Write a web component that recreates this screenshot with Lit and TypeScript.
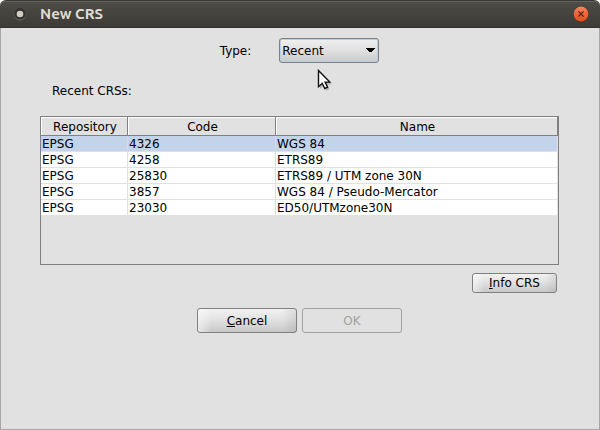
import { LitElement, html, css } from "lit";
import { customElement, state } from "lit/decorators.js";

interface Crs {
  repository: string;
  code: string;
  name: string;
}

const RECENT: Crs[] = [
  { repository: "EPSG", code: "4326", name: "WGS 84" },
  { repository: "EPSG", code: "4258", name: "ETRS89" },
  { repository: "EPSG", code: "25830", name: "ETRS89 / UTM zone 30N" },
  { repository: "EPSG", code: "3857", name: "WGS 84 / Pseudo-Mercator" },
  { repository: "EPSG", code: "23030", name: "ED50/UTMzone30N" },
];

@customElement("title-bar")
class TitleBar extends LitElement {
  static styles = css`
    :host {
      display: flex;
      align-items: center;
      box-sizing: border-box;
      height: 28px;
      padding: 0 11px 0 13px;
      background: linear-gradient(#4d4c46, #3c3b37);
      border-top: 1px solid #3a3935;
      border-bottom: 1px solid #33322e;
      box-shadow: inset 0 1px #65645d;
      border-radius: 6px 6px 0 0;
    }
    .menu,
    .close {
      display: block;
      flex: none;
    }
    h1 {
      flex: 1;
      margin: 0 0 0 13px;
      font: bold 15px/20px Ubuntu, "Noto Sans", sans-serif;
      color: #dfdbd2;
    }
    button {
      padding: 0;
      border: 0;
      background: none;
      line-height: 0;
    }
  `;

  render() {
    return html`
      <svg class="menu" width="14" height="14" viewBox="0 0 14 14" aria-hidden="true">
        <circle cx="7" cy="7.6" r="5.8" fill="#77756c" />
        <circle cx="7" cy="6.8" r="5.8" fill="#34332f" />
        <circle cx="7" cy="7" r="3.3" fill="#cfccc5" />
      </svg>
      <h1>New CRS</h1>
      <button type="button" aria-label="Close">
        <svg class="close" width="16" height="16" viewBox="0 0 16 16">
          <defs>
            <linearGradient id="g" x2="0" y2="1">
              <stop offset="0" stop-color="#f88361" />
              <stop offset=".5" stop-color="#f1633a" />
              <stop offset="1" stop-color="#e64c18" />
            </linearGradient>
          </defs>
          <circle cx="8" cy="8" r="7.8" fill="#35342f" />
          <circle cx="8" cy="8" r="7.4" fill="url(#g)" />
          <path d="M5.400 5.400l5.200 5.200M10.600 5.400l-5.200 5.200" stroke="#4a2418" stroke-width="1.300" />
        </svg>
      </button>
    `;
  }
}

@customElement("app-root")
export class AppRoot extends LitElement {
  @state() private selected = 0;

  static styles = css`
    :host {
      display: block;
      background: #fff;
      font: 12px/16px "DejaVu Sans", sans-serif;
      color: #000;
    }
    .window {
      display: flex;
      flex-direction: column;
      box-sizing: border-box;
      min-height: 100vh;
    }
    .body {
      position: relative;
      flex: 1;
      padding: 10px 40px 16px 39px;
      background: #e1e1e1;
      border: 1px solid #a8a6a3;
      border-top: 0;
    }
    .type {
      display: flex;
      align-items: center;
      justify-content: center;
      gap: 28px;
    }
    .combo {
      position: relative;
      width: 100px;
    }
    select,
    .btn {
      box-sizing: border-box;
      margin: 0;
      border: 1px solid #808080;
      border-radius: 3px;
      font: inherit;
      color: #000;
    }
    select {
      display: block;
      appearance: none;
      width: 100%;
      height: 25px;
      padding: 0 20px 0 2px;
      outline: none;
      background: linear-gradient(#f0f0f0, #e0e0e0 50%, #c9c9c9);
      box-shadow: inset 0 0 0 1px #b8cfe5;
    }
    .arrow {
      position: absolute;
      right: 4px;
      top: 10px;
      pointer-events: none;
    }
    .cursor {
      position: absolute;
      left: 316px;
      top: 41px;
      pointer-events: none;
    }
    h2 {
      margin: 20px 0 17px 12px;
      font: inherit;
    }
    .list {
      box-sizing: border-box;
      height: 149px;
      overflow: hidden;
      border: 1px solid #808080;
    }
    table {
      width: 100%;
      table-layout: fixed;
      border-collapse: separate;
      border-spacing: 0;
    }
    .repository {
      width: 87px;
    }
    .code {
      width: 148px;
    }
    th,
    td {
      box-sizing: border-box;
      padding: 0;
      white-space: nowrap;
      overflow: hidden;
    }
    th {
      height: 19px;
      padding: 2px 0 0 2px;
      line-height: 16px;
      font-weight: normal;
      text-align: center;
      border-right: 1px solid #808080;
      border-bottom: 1px solid #808080;
      box-shadow: inset 1px 1px #fff;
    }
    td {
      height: 16px;
      padding: 1px 0 0 1px;
      line-height: 14px;
      background: #fff;
      border-right: 1px solid #e1e1e1;
      border-bottom: 1px solid #e1e1e1;
    }
    .selected td {
      background: #c3d3e9;
      border-right-color: #d2dae5;
    }
    .selected td:last-child {
      border-right-color: #e1e1e1;
    }
    .btn {
      width: 100px;
      height: 25px;
      padding: 0;
      background: linear-gradient(to right, #fff8, #fff0 14%, #fff0 86%, #8883),
        linear-gradient(#f2f2f2, #e0e0e0 50%, #c8c8c8);
    }
    .btn:disabled {
      color: #a3a3a3;
      border-color: #a3a3a3;
      background: #e1e1e1;
    }
    .small {
      width: 85px;
      height: 20px;
    }
    .key {
      text-decoration: underline 1px;
      text-underline-offset: 1px;
      text-decoration-skip-ink: none;
    }
    .info {
      display: flex;
      justify-content: flex-end;
      margin: 8px 2px 15px 0;
    }
    .actions {
      display: flex;
      justify-content: center;
      gap: 5px;
    }
  `;

  render() {
    return html`
      <div class="window">
        <title-bar></title-bar>
        <main class="body">
          <div class="type">
            <label for="type">Type:</label>
            <div class="combo">
              <select id="type">
                <option>Recent</option>
              </select>
              <svg class="arrow" width="9" height="5" viewBox="0 0 9 5" aria-hidden="true">
                <path d="M0 0h9v1H8v1H7v1H6v1H3V3H2V2H1V1H0z" shape-rendering="crispEdges" />
              </svg>
            </div>
          </div>
          <h2 id="recent">Recent CRSs:</h2>
          <div class="list">
            <table aria-labelledby="recent">
              <colgroup>
                <col class="repository" />
                <col class="code" />
                <col />
              </colgroup>
              <thead>
                <tr>
                  <th scope="col">Repository</th>
                  <th scope="col">Code</th>
                  <th scope="col">Name</th>
                </tr>
              </thead>
              <tbody>
                ${RECENT.map(
                  (crs, i) => html`
                    <tr
                      class=${i === this.selected ? "selected" : ""}
                      @click=${() => (this.selected = i)}
                    >
                      <td>${crs.repository}</td>
                      <td>${crs.code}</td>
                      <td>${crs.name}</td>
                    </tr>
                  `,
                )}
              </tbody>
            </table>
          </div>
          <div class="info">
            <button type="button" class="btn small"><span class="key">I</span>nfo CRS</button>
          </div>
          <div class="actions">
            <button type="button" class="btn"><span class="key">C</span>ancel</button>
            <button type="button" class="btn" disabled>OK</button>
          </div>
          <svg class="cursor" width="16" height="22" viewBox="0 0 16 22" aria-hidden="true">
            <path d="M3 3v17l3.600-3.200 2.600 5 3.200-1.400-2.400-4.800h4.600z" fill="#0003" />
            <path
              d="M1.500 1.500v16.200l3.700-3.400 2.600 5.200 2.800-1.300-2.500-5.100h4.700z"
              fill="#fff"
              stroke="#111"
              stroke-width="1.400"
            />
          </svg>
        </main>
      </div>
    `;
  }
}
